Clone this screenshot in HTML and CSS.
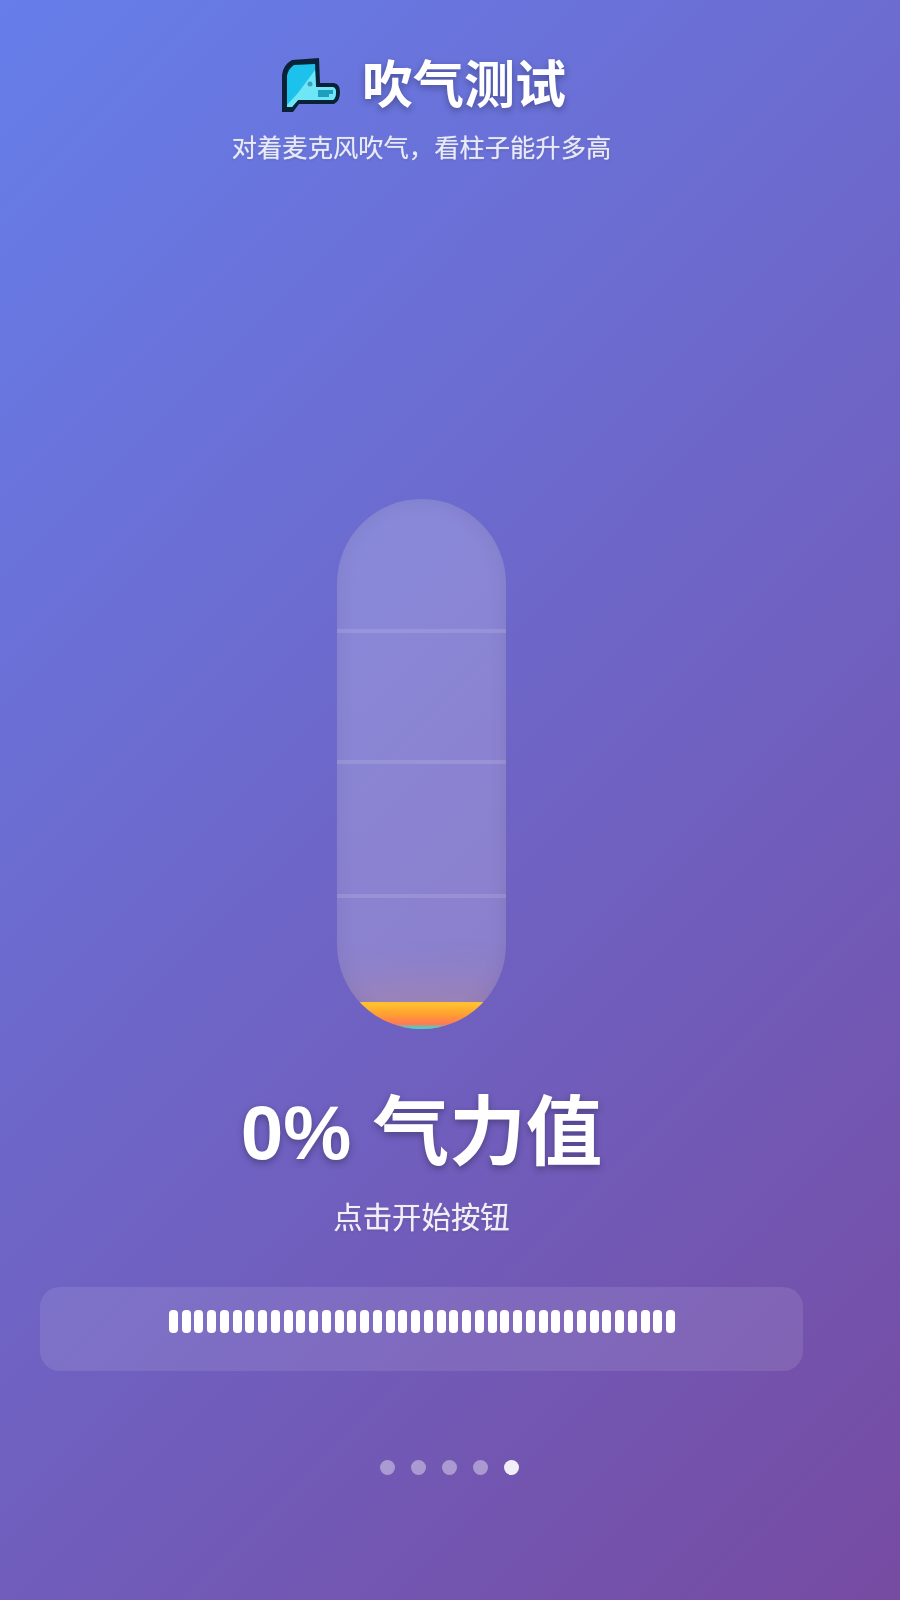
FILE: index.html
```html
<!DOCTYPE html>
<html lang="zh-CN">
<head>
    <meta charset="UTF-8">
    <meta name="viewport" content="width=device-width, initial-scale=1.0">
    <title>吹气测试</title>
    <link rel="stylesheet" href="styles.css">
</head>
<body>
    <div class="container">
        <!-- Header -->
        <div class="header">
            <div class="title-row">
                <svg class="title-icon" viewBox="0 0 60 56" aria-hidden="true">
                    <path d="M1 54 L1 17 Q2 7 11 2 L38 0 L39 25 L53 25 Q59 26 59 34 Q59 43 53 46 L18 46 L12 54 Z" fill="#0a2238"/>
                    <path d="M6 49 L6 18 Q7 11 13 7 L34 6 L35 29 L52 29 Q55 30 55 34 Q55 40 52 42 L17 42 L11 49 Z" fill="#1cc2ec"/>
                    <path d="M34 12 L35 29 L52 29 Q55 30 55 34 Q55 40 52 42 L17 42 L11 49 L6 49 L6 47 L17 35 Z" fill="#6fe6f6"/>
                    <path d="M37 32 L52 32 L52 36 L48 36 L48 39 L37 39 Z" fill="#1e9dbd"/>
                    <circle cx="29" cy="26" r="2.5" fill="#3f9fc0"/>
                </svg>
                <h1>吹气测试</h1>
            </div>
            <p class="subtitle">对着麦克风吹气，看柱子能升多高</p>
        </div>

        <!-- Column -->
        <div class="column">
            <div class="tick tick-75"></div>
            <div class="tick tick-50"></div>
            <div class="tick tick-25"></div>
            <div class="fill"></div>
        </div>

        <div class="power">0% 气力值</div>
        <div class="status">点击开始按钮</div>

        <!-- Level meter -->
        <div class="meter-panel">
            <div class="meter">
                <span></span><span></span><span></span><span></span><span></span><span></span><span></span><span></span>
                <span></span><span></span><span></span><span></span><span></span><span></span><span></span><span></span>
                <span></span><span></span><span></span><span></span><span></span><span></span><span></span><span></span>
                <span></span><span></span><span></span><span></span><span></span><span></span><span></span><span></span>
                <span></span><span></span><span></span><span></span><span></span><span></span><span></span><span></span>
            </div>
        </div>
    </div>

    <div class="dots">
        <span class="dot"></span>
        <span class="dot"></span>
        <span class="dot"></span>
        <span class="dot"></span>
        <span class="dot active"></span>
    </div>
</body>
</html>
```

FILE: styles.css
```css
* {
    box-sizing: border-box;
}
html, body {
    margin: 0;
    padding: 0;
}
body {
    width: 900px;
    height: 1600px;
    overflow: hidden;
    font-family: "Liberation Sans", "Noto Sans CJK SC", sans-serif;
    color: #fff;
    background: linear-gradient(135deg, #667eea 0%, #764ba2 100%);
}
.container {
    width: 843px;
    padding-top: 56px;
    display: flex;
    flex-direction: column;
    align-items: center;
}
.header {
    text-align: center;
}
.title-row {
    display: flex;
    align-items: center;
    justify-content: center;
    gap: 21px;
    padding-left: 4px;
}
.title-icon {
    width: 60px;
    height: 56px;
    flex: none;
    filter: blur(0.7px);
}
h1 {
    margin: 0;
    font-size: 51px;
    line-height: 60px;
    font-weight: 700;
    text-shadow: 0 3px 7px rgba(0, 0, 0, 0.3);
    filter: blur(0.5px);
}
.subtitle {
    margin: 15px 0 0;
    font-size: 25.3px;
    line-height: 34px;
    opacity: 0.85;
    text-shadow: 0 0 1px rgba(255, 255, 255, 0.7), 0 1px 3px rgba(0, 0, 0, 0.2);
    filter: blur(0.5px);
}
.column {
    position: relative;
    width: 169px;
    height: 530px;
    margin-top: 334px;
    border-radius: 85px;
    overflow: hidden;
    background: rgba(255, 255, 255, 0.2);
    box-shadow: inset 0 0 20px rgba(0, 0, 0, 0.08);
}
.tick {
    position: absolute;
    left: 0;
    right: 0;
    height: 4px;
    background: rgba(255, 255, 255, 0.12);
}
.tick-75 {
    top: 130px;
}
.tick-50 {
    top: 261px;
}
.tick-25 {
    top: 395px;
}
.fill {
    position: absolute;
    left: 0;
    right: 0;
    bottom: 0;
    height: 27px;
    background: linear-gradient(to top, #4ecdc4 0%, #4ecdc4 6%, #ff7a55 18%, #ffa030 55%, #ffc030 92%);
    box-shadow: 0 0 55px rgba(255, 150, 60, 0.4);
}
.power {
    margin-top: 56px;
    font-size: 76.5px;
    line-height: 96px;
    font-weight: 700;
    text-shadow: 0 3px 7px rgba(0, 0, 0, 0.3);
    filter: blur(0.5px);
}
.status {
    margin-top: 16px;
    font-size: 29.4px;
    line-height: 42px;
    opacity: 0.9;
    text-shadow: 0 0 1px rgba(255, 255, 255, 0.7), 0 1px 3px rgba(0, 0, 0, 0.2);
    filter: blur(0.5px);
}
.meter-panel {
    width: 763px;
    height: 84px;
    margin-top: 48px;
    padding-top: 23px;
    border-radius: 20px;
    background: rgba(255, 255, 255, 0.1);
}
.meter {
    display: flex;
    justify-content: center;
    gap: 3.75px;
    padding-left: 1px;
}
.meter span {
    width: 9px;
    height: 23px;
    border-radius: 4px;
    background: #fff;
}
.dots {
    display: flex;
    justify-content: center;
    gap: 16px;
    margin-top: 89px;
    padding-right: 2px;
}
.dot {
    width: 15px;
    height: 15px;
    border-radius: 50%;
    background: rgba(255, 255, 255, 0.4);
}
.dot.active {
    background: rgba(255, 255, 255, 0.9);
}
```
